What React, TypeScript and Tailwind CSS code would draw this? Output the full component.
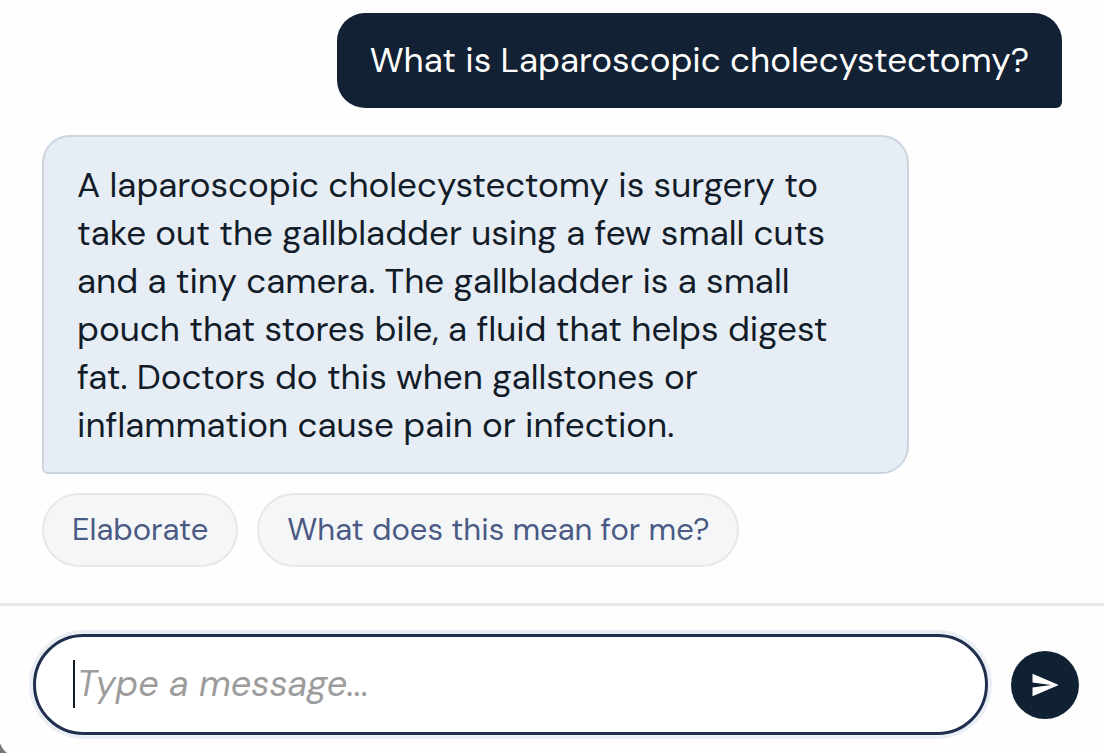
import { useState } from "react";

const suggestions = ["Elaborate", "What does this mean for me?"];

function SendIcon() {
  return (
    <svg viewBox="0 0 24 24" className="size-[30px]" fill="currentColor" aria-hidden="true">
      <path d="M2.01 21 23 12 2.01 3 2 10l15 2-15 2z" />
    </svg>
  );
}

export default function App() {
  const [message, setMessage] = useState("");

  return (
    <div className="relative flex min-h-screen flex-col overflow-hidden bg-[#fefefe] font-['DM_Sans',Inter,sans-serif] text-[35px] leading-[48px]">
      <main className="flex flex-1 flex-col px-[42px] pt-[13px] pb-9">
        <p className="max-w-[85%] self-end rounded-[28px] rounded-br-md bg-[#122133] px-[33px] pt-[23px] pb-6 text-white">
          What is Laparoscopic cholecystectomy?
        </p>
        <p className="mt-[27px] w-[85%] rounded-[28px] rounded-bl-md border-2 border-[#ccd5df] bg-[#e7edf4] px-[33px] pt-6 pb-[23px] text-[#121c29]">
          A laparoscopic cholecystectomy is surgery to take out the gallbladder using a few small cuts
          and a tiny camera. The gallbladder is a small pouch that stores bile, a fluid that helps
          digest fat. Doctors do this when gallstones or inflammation cause pain or infection.
        </p>
        <div className="mt-[19px] flex flex-wrap gap-[19px]">
          {suggestions.map((label) => (
            <button
              key={label}
              type="button"
              className="rounded-full border-2 border-[#e7e8ea] bg-[#f5f6f7] px-7 py-[15px] text-[31px] leading-10 text-[#4a5a85]"
            >
              {label}
            </button>
          ))}
        </div>
      </main>

      <form
        className="flex items-center gap-[23px] border-t-3 border-[#e8e8e8] pt-7 pr-[25px] pb-[18px] pl-[33px]"
        onSubmit={(event) => {
          event.preventDefault();
          setMessage("");
        }}
      >
        <div className="flex min-w-0 flex-1 items-center rounded-full border-3 border-[#1f2f4d] bg-white pt-[23px] pb-6 pr-9 pl-[37px] ring-4 ring-[#e9eff5]">
          <span className="h-12 w-0.5 shrink-0 bg-[#121c29]" aria-hidden="true" />
          <input
            type="text"
            aria-label="Message"
            value={message}
            onChange={(event) => setMessage(event.target.value)}
            placeholder="Type a message..."
            className="h-12 min-w-0 flex-1 bg-transparent pl-0.5 text-[36px] outline-none placeholder:text-[#9c9c9c] placeholder:italic"
          />
        </div>
        <button
          type="submit"
          aria-label="Send message"
          className="flex size-[68px] shrink-0 items-center justify-center rounded-full bg-[#0f2133] text-white"
        >
          <SendIcon />
        </button>
      </form>

      <svg
        viewBox="0 0 7 10"
        className="absolute bottom-0 left-0 h-2.5 w-[7px] text-[#777777]"
        fill="currentColor"
        aria-hidden="true"
      >
        <path d="M0 0Q2 6 7 10H0z" />
      </svg>
    </div>
  );
}
